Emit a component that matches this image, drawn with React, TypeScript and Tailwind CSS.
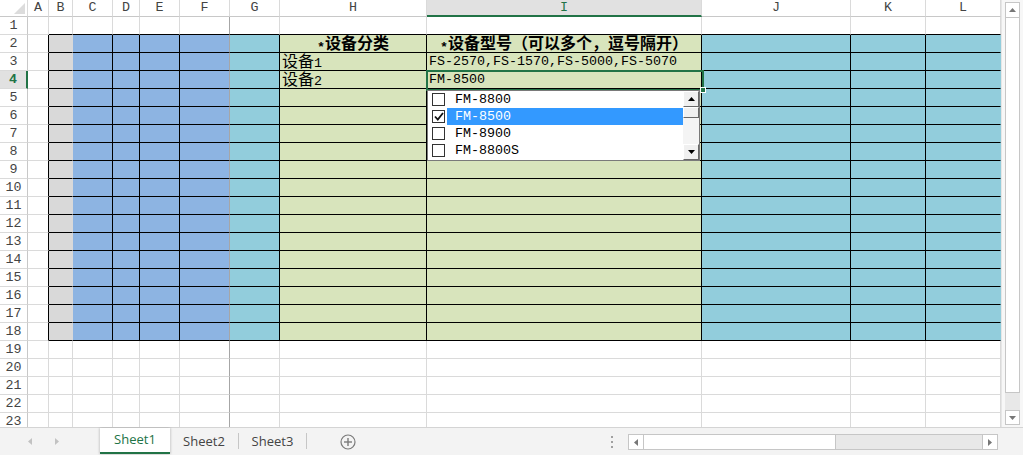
import React from "react";

const mono = "font-['Liberation_Mono',monospace] text-[13.33px]";
const cjk = "font-['Noto_Sans_CJK_SC',sans-serif] text-[16px]";

const COLS = ["A", "B", "C", "D", "E", "F", "G", "H", "I", "J", "K", "L"];
const ROWS = Array.from({ length: 23 }, (_, i) => i + 1);

const fills: Record<string, string> = {
  B: "bg-[#d9d9d9]",
  C: "bg-[#8db4e2]",
  D: "bg-[#8db4e2]",
  E: "bg-[#8db4e2]",
  F: "bg-[#8db4e2]",
  G: "bg-[#92cddc]",
  H: "bg-[#d8e4bc]",
  I: "bg-[#d8e4bc]",
  J: "bg-[#92cddc]",
  K: "bg-[#92cddc]",
  L: "bg-[#92cddc]",
};

const inBox = (row: number) => row >= 2 && row <= 18;

function rightBorder(col: string, row: number) {
  if (col === "F") return "border-r-[#a6a6a6]";
  if (!inBox(row)) return "border-r-[#dadada]";
  if (col === "B" || col === "L") return "border-r-transparent";
  return "border-r-black";
}

function bottomBorder(col: string, row: number) {
  if (col !== "A" && row >= 1 && row <= 18) return "border-b-black";
  return "border-b-[#dadada]";
}

// mixed CJK / latin text sits on one baseline as inline spans
const content: Record<string, React.ReactNode> = {
  H2: (
    <span className="block w-full text-center font-semibold leading-[17px]">
      <span className={`${mono} relative top-[2px]`}>*</span>
      <span className={cjk}>设备分类</span>
    </span>
  ),
  I2: (
    <span className="block w-full text-center font-semibold leading-[17px]">
      <span className={`${mono} relative top-[2px]`}>*</span>
      <span className={cjk}>设备型号（可以多个，逗号隔开）</span>
    </span>
  ),
  H3: (
    <span className="block leading-[17px]">
      <span className={cjk}>设备</span>
      <span className={mono}>1</span>
    </span>
  ),
  H4: (
    <span className="block leading-[17px]">
      <span className={cjk}>设备</span>
      <span className={mono}>2</span>
    </span>
  ),
  I3: <span className={mono}>FS-2570,FS-1570,FS-5000,FS-5070</span>,
  I4: <span className={mono}>FM-8500</span>,
};

function Tri({ dir, color = "#505050" }: { dir: "up" | "down" | "left" | "right"; color?: string }) {
  const pts =
    dir === "up"
      ? "0,4 7,4 3.5,0"
      : dir === "down"
      ? "0,0 7,0 3.5,4"
      : dir === "left"
      ? "4,0 4,7 0,3.5"
      : "0,0 0,7 4,3.5";
  const w = dir === "up" || dir === "down" ? 7 : 4;
  const h = dir === "up" || dir === "down" ? 4 : 7;
  return (
    <svg width={w} height={h} viewBox={`0 0 ${w} ${h}`}>
      <polygon points={pts} fill={color} />
    </svg>
  );
}

function ClassicBtn({ dir }: { dir: "up" | "down" }) {
  return (
    <div className="w-[16px] h-[16px] bg-[#f0f0f0] border border-t-white border-l-white border-r-[#696969] border-b-[#696969] flex items-center justify-center">
      <Tri dir={dir} color="#000" />
    </div>
  );
}

function Checkbox({ checked }: { checked?: boolean }) {
  return (
    <div className="w-[13px] h-[13px] border border-[#333] bg-white flex items-center justify-center">
      {checked && (
        <svg width="10" height="9" viewBox="0 0 10 9">
          <polyline points="1,4.5 3.8,7.5 9,1" fill="none" stroke="#111" strokeWidth="1.8" />
        </svg>
      )}
    </div>
  );
}

function Dropdown() {
  const items = [
    { t: "FM-8800" },
    { t: "FM-8500", sel: true },
    { t: "FM-8900" },
    { t: "FM-8800S" },
  ];
  return (
    <div className="absolute left-[427px] top-[90px] w-[273px] h-[71px] bg-white border border-[#7a7a7a] flex">
      <div className="flex-1 flex flex-col">
        {items.map((it) => (
          <div key={it.t} className="h-[17px] flex items-center">
            <div className="w-[19px] pl-[4px] flex items-center">
              <Checkbox checked={it.sel} />
            </div>
            <div
              className={`flex-1 h-[17px] pl-[8px] flex items-center ${mono} ${
                it.sel ? "bg-[#3399ff] text-white" : "text-black"
              }`}
            >
              {it.t}
            </div>
          </div>
        ))}
      </div>
      <div className="w-[16px] flex flex-col bg-[#f4f4f4]">
        <ClassicBtn dir="up" />
        <div className="h-[11px] bg-[#f0f0f0] border border-t-white border-l-white border-r-[#696969] border-b-[#696969]" />
        <div className="flex-1" />
        <ClassicBtn dir="down" />
      </div>
    </div>
  );
}

function Sheet() {
  return (
    <div className="relative w-[1001px] h-[427px] overflow-hidden bg-white">
      <div className="grid grid-cols-[28px_21px_24px_40px_27px_40px_50px_50px_147px_275px_149px_75px_75px] grid-rows-[17px_repeat(23,18px)]">
        {/* column header row */}
        <div className="border-r border-b border-r-[#dadada] border-b-[#c8c8c8] flex items-end justify-end p-[2px]">
          <svg width="11" height="11" viewBox="0 0 11 11">
            <polygon points="11,0 11,11 0,11" fill="#dcdcdc" />
          </svg>
        </div>
        {COLS.map((c) =>
          c === "I" ? (
            <div
              key={c}
              className={`bg-[#e1e1e1] border-r border-r-[#dadada] border-b-2 border-b-[#217346] text-[#217346] flex items-center justify-center ${mono}`}
            >
              {c}
            </div>
          ) : (
            <div
              key={c}
              className={`border-r border-b border-r-[#dadada] border-b-[#c8c8c8] text-[#444] flex items-center justify-center ${mono}`}
            >
              {c}
            </div>
          )
        )}
        {ROWS.map((r) => (
          <React.Fragment key={r}>
            {r === 4 ? (
              <div
                className={`bg-[#e1e1e1] border-r-2 border-b border-r-[#217346] border-b-[#dadada] text-[#217346] font-bold flex items-center justify-center ${mono}`}
              >
                {r}
              </div>
            ) : (
              <div
                className={`border-r border-b border-r-[#c8c8c8] border-b-[#dadada] text-[#444] flex items-center justify-center ${mono}`}
              >
                {r}
              </div>
            )}
            {COLS.map((c) => (
              <div
                key={c}
                className={`border-r border-b ${rightBorder(c, r)} ${bottomBorder(c, r)} ${
                  inBox(r) ? fills[c] ?? "" : ""
                } ${c === "A" && inBox(r) ? "border-r-black" : ""} flex items-center px-[2px] whitespace-nowrap overflow-visible leading-none text-black`}
              >
                {content[`${c}${r}`]}
              </div>
            ))}
          </React.Fragment>
        ))}
      </div>

      {/* active cell I4 */}
      <div className="absolute left-[426px] top-[70px] w-[278px] h-[21px] border-2 border-[#217346] pointer-events-none" />
      <div className="absolute left-[700px] top-[87px] w-[6px] h-[6px] bg-[#217346] border border-white" />

      <Dropdown />
    </div>
  );
}

function VScroll() {
  return (
    <div className="w-[22px] h-[427px] bg-[#f7f7f7] flex flex-col items-center pt-[2px] pb-[2px] border-l border-[#e6e6e6]">
      <div className="w-[15px] h-[16px] bg-white border border-[#c6c6c6] flex items-center justify-center">
        <Tri dir="up" color="#777" />
      </div>
      <div className="w-[15px] h-[375px] bg-white border border-[#c6c6c6] border-t-0" />
      <div className="w-[15px] flex-1 bg-[#e8e8e8]" />
      <div className="w-[15px] h-[15px] bg-white border border-[#c6c6c6] flex items-center justify-center">
        <Tri dir="down" color="#777" />
      </div>
    </div>
  );
}

function TabBar() {
  const sans = "font-['Open_Sans',sans-serif] text-[13px]";
  return (
    <div className="h-[28px] bg-[#f3f3f3] border-t border-[#d4d4d4] flex items-start">
      <div className="w-[100px] h-[27px] flex items-center pl-[28px] gap-[23px]">
        <Tri dir="left" color="#c2c2c2" />
        <Tri dir="right" color="#c2c2c2" />
      </div>
      <div
        className={`w-[70px] h-[26px] bg-white border-b-2 border-[#217346] shadow-[1px_0_2px_rgba(0,0,0,0.15),-1px_0_2px_rgba(0,0,0,0.15)] text-[#217346] flex items-center justify-center ${sans}`}
      >
        Sheet1
      </div>
      <div className={`w-[68px] h-[27px] text-[#444] flex items-center justify-center ${sans}`}>Sheet2</div>
      <div className="w-px h-[16px] mt-[5px] bg-[#c6c6c6]" />
      <div className={`w-[67px] h-[27px] text-[#444] flex items-center justify-center ${sans}`}>Sheet3</div>
      <div className="w-px h-[16px] mt-[5px] bg-[#c6c6c6]" />
      <div className="ml-[33px] h-[27px] flex items-center">
        <svg width="16" height="16" viewBox="0 0 16 16">
          <circle cx="8" cy="8" r="7" fill="none" stroke="#7a7a7a" strokeWidth="1.2" />
          <line x1="8" y1="4" x2="8" y2="12" stroke="#7a7a7a" strokeWidth="1.4" />
          <line x1="4" y1="8" x2="12" y2="8" stroke="#7a7a7a" strokeWidth="1.4" />
        </svg>
      </div>
      <div className="ml-[255px] h-[27px] flex flex-col justify-center gap-[3px]">
        <div className="w-[2px] h-[2px] bg-[#a0a0a0]" />
        <div className="w-[2px] h-[2px] bg-[#a0a0a0]" />
        <div className="w-[2px] h-[2px] bg-[#a0a0a0]" />
      </div>
      <div className="ml-[15px] mt-[6px] w-[370px] h-[16px] border border-[#c6c6c6] bg-[#e8e8e8] flex">
        <div className="w-[15px] h-full bg-white border-r border-[#c6c6c6] flex items-center justify-center">
          <Tri dir="left" color="#777" />
        </div>
        <div className="w-[192px] h-full bg-white border-r border-[#c6c6c6]" />
        <div className="flex-1" />
        <div className="w-[15px] h-full bg-white border-l border-[#c6c6c6] flex items-center justify-center">
          <Tri dir="right" color="#777" />
        </div>
      </div>
    </div>
  );
}

export default function App() {
  return (
    <div className="w-[1023px] h-[455px] overflow-hidden bg-white flex flex-col">
      <div className="flex h-[427px]">
        <Sheet />
        <VScroll />
      </div>
      <TabBar />
    </div>
  );
}
